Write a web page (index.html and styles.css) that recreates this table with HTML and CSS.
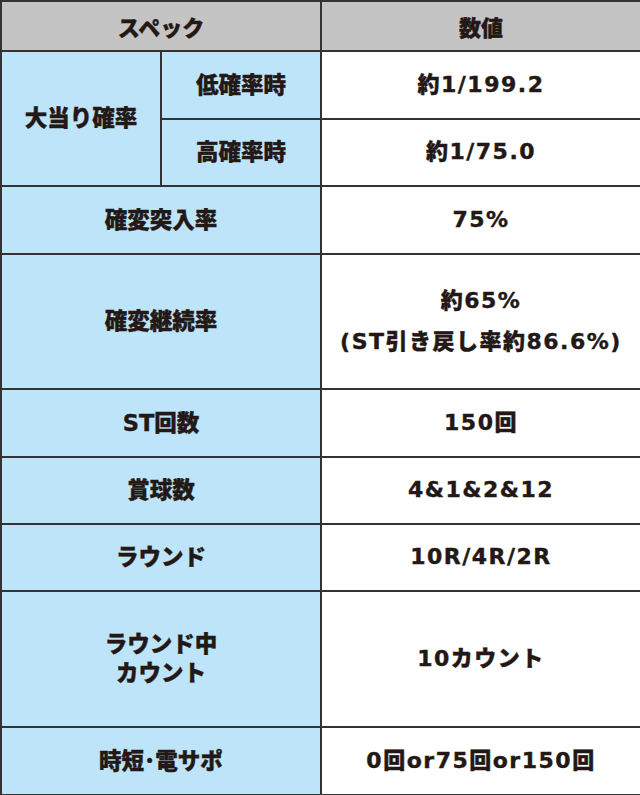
FILE: index.html
```html
<!DOCTYPE html>
<html lang="ja">
<head>
<meta charset="utf-8">
<title>スペック</title>
<link rel="stylesheet" href="styles.css">
</head>
<body>
<table class="spec">
  <colgroup>
    <col class="c1"><col class="c2"><col class="c3">
  </colgroup>
  <tr class="h50">
    <th class="head" colspan="2">スペック</th>
    <th class="head">数値</th>
  </tr>
  <tr class="h68">
    <td class="label" rowspan="2">大当り確率</td>
    <td class="label">低確率時</td>
    <td class="value">約1/199.2</td>
  </tr>
  <tr class="h67">
    <td class="label">高確率時</td>
    <td class="value">約1/75.0</td>
  </tr>
  <tr class="h68">
    <td class="label" colspan="2">確変突入率</td>
    <td class="value">75%</td>
  </tr>
  <tr class="h135">
    <td class="label" colspan="2">確変継続率</td>
    <td class="value"><span class="line">約65%</span><span class="line line2">(ST引き戻し率約86.6%)</span></td>
  </tr>
  <tr class="h68">
    <td class="label" colspan="2">ST回数</td>
    <td class="value">150回</td>
  </tr>
  <tr class="h67">
    <td class="label" colspan="2">賞球数</td>
    <td class="value">4&amp;1&amp;2&amp;12</td>
  </tr>
  <tr class="h67">
    <td class="label" colspan="2">ラウンド</td>
    <td class="value">10R/4R/2R</td>
  </tr>
  <tr class="h136">
    <td class="label two" colspan="2"><span class="line">ラウンド中</span><span class="line">カウント</span></td>
    <td class="value">10カウント</td>
  </tr>
  <tr class="h68">
    <td class="label" colspan="2">時短･電サポ</td>
    <td class="value">0回or75回or150回</td>
  </tr>
</table>
</body>
</html>
```
FILE: styles.css
```css
html, body {
  margin: 0;
  padding: 0;
  background: #ffffff;
}

.spec {
  border-collapse: collapse;
  table-layout: fixed;
  width: 640px;
  color: #231815;
  font-family: "DejaVu Sans", "Noto Sans CJK JP", sans-serif;
  font-weight: 900;
  font-size: 22px;
  -webkit-text-stroke: 0.4px #231815;
}

.c1 { width: 160px; }
.c2 { width: 160px; }
.c3 { width: 320px; }

.spec th,
.spec td {
  border: 2px solid #333333;
  padding: 0;
  text-align: center;
  vertical-align: middle;
  line-height: 1.2;
}

.head {
  background: #c4c4c4;
  font-weight: 900;
  font-family: "Noto Sans CJK JP", sans-serif;
}

.label {
  background: #bde4f8;
  font-size: 22.5px;
}

.value {
  background: #ffffff;
  letter-spacing: 1.5px;
}

.line {
  display: block;
}

.value .line2 {
  margin-top: 14px;
}

.two {
  padding-bottom: 6px;
}

.two .line {
  line-height: 29px;
}

.h50 { height: 50px; }
.h67 { height: 67px; }
.h68 { height: 68px; }
.h135 { height: 135px; }
.h136 { height: 136px; }
```
